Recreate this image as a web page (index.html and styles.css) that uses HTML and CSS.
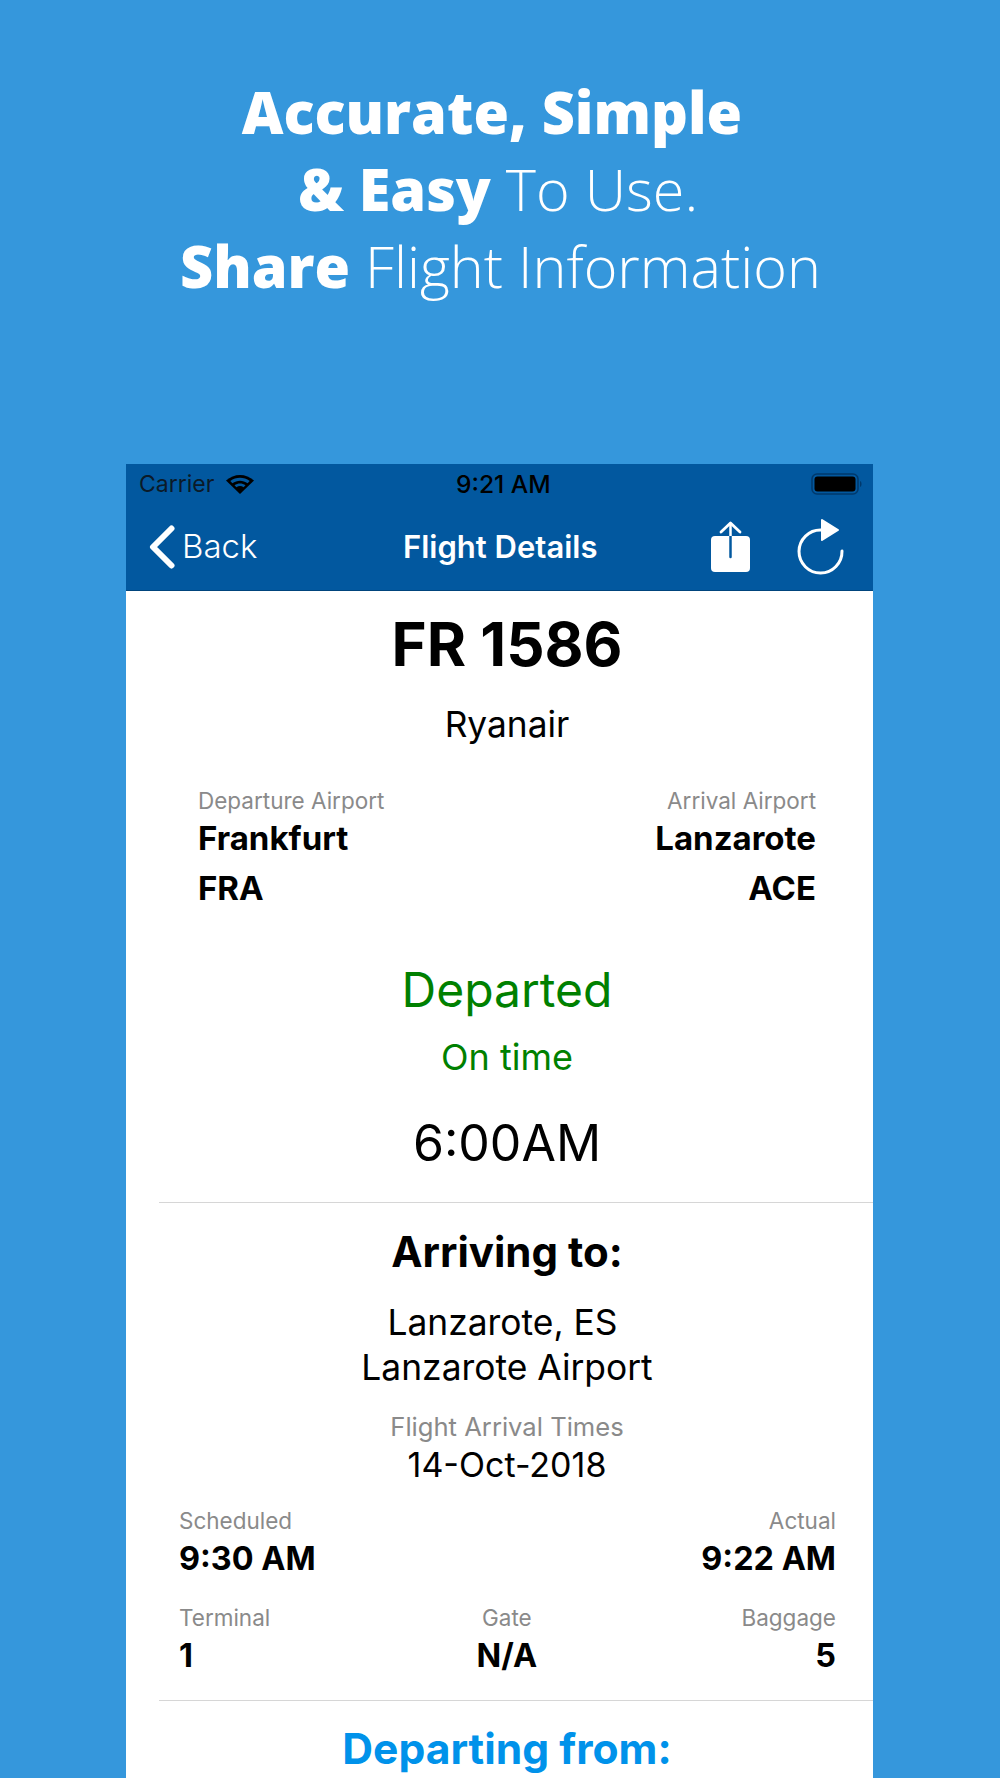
FILE: index.html
```html
<!DOCTYPE html>
<html lang="en">
<head>
  <meta charset="UTF-8" />
  <title>Flight Details</title>
  <link rel="stylesheet" href="styles.css">
</head>
<body>
  <h1 class="headline">
    <div><span class="heavy">Accurate, Simple</span></div>
    <div class="line-2"><span class="heavy">&amp; Easy</span> To Use.</div>
    <div class="line-3"><span class="heavy">Share</span> Flight Information</div>
  </h1>

  <div class="phone">
    <div class="status-bar">
      <div class="carrier">
        Carrier
        <svg class="wifi" width="30" height="22" viewBox="0 0 30 22">
          <path d="M15 21 L1 7.5 C9 0 21 0 29 7.5 Z" fill="#000"/>
          <path d="M5.3 8 C11 3.6 19 3.6 24.7 8 L22.6 10.2 C18 6.8 12 6.8 7.4 10.2 Z" fill="#02589f"/>
          <path d="M9.5 12.2 C13 9.8 17 9.8 20.5 12.2 L18.6 14.2 C16.2 12.7 13.8 12.7 11.4 14.2 Z" fill="#02589f"/>
        </svg>
      </div>
      <div class="clock">9:21 AM</div>
      <svg class="battery" width="52" height="24" viewBox="0 0 52 24">
        <rect x="1" y="2" width="46" height="20" rx="5" fill="none" stroke="#00396c" stroke-width="1.5"/>
        <rect x="3.5" y="4.5" width="41" height="15" rx="3" fill="#000"/>
        <path d="M49 9 C51 9.5 51 14.5 49 15 Z" fill="#00396c"/>
      </svg>
    </div>

    <nav class="nav-bar">
      <div class="back">
        <svg width="28" height="44" viewBox="0 0 28 44">
          <path d="M23.5 3.5 L5 22 L23.5 40.5" fill="none" stroke="#fff" stroke-width="6" stroke-linecap="round" stroke-linejoin="round"/>
        </svg>
        <span>Back</span>
      </div>
      <div class="nav-title">Flight Details</div>
      <div class="nav-icons">
        <svg width="40" height="52" viewBox="0 0 40 52">
          <rect x="0" y="15" width="39" height="36" rx="4" fill="#fff"/>
          <path d="M19.5 36 V3" fill="none" stroke="#02589f" stroke-width="2.5" stroke-linecap="round"/>
          <path d="M19.5 2.5 V15" fill="none" stroke="#fff" stroke-width="2.5"/>
          <path d="M10 11 L19.5 2 L29 11" fill="none" stroke="#fff" stroke-width="2.8" stroke-linecap="round" stroke-linejoin="round"/>
        </svg>
        <svg width="48" height="56" viewBox="0 0 48 56">
          <path d="M45 32 A21.5 21.5 0 1 1 24 11" fill="none" stroke="#fff" stroke-width="3" stroke-linecap="round"/>
          <path d="M25 1 L41 11 L25 21 Z" fill="#fff" stroke="#fff" stroke-width="2" stroke-linejoin="round"/>
        </svg>
      </div>
    </nav>

    <main class="details">
      <section class="section section-top">
        <div class="flight-no">FR 1586</div>
        <div class="airline">Ryanair</div>

        <div class="airports">
          <div>
            <div class="label">Departure Airport</div>
            <div class="airport-name">Frankfurt</div>
            <div class="airport-code">FRA</div>
          </div>
          <div class="right">
            <div class="label">Arrival Airport</div>
            <div class="airport-name">Lanzarote</div>
            <div class="airport-code">ACE</div>
          </div>
        </div>

        <div class="status">Departed</div>
        <div class="status-sub">On time</div>
        <div class="big-time">6:00AM</div>
      </section>

      <section class="section section-arrive">
        <div class="section-title">Arriving to:</div>
        <div class="place place-city">Lanzarote, ES</div>
        <div class="place">Lanzarote Airport</div>
        <div class="label times-label">Flight Arrival Times</div>
        <div class="times-date">14-Oct-2018</div>

        <div class="info-row">
          <div>
            <div class="label">Scheduled</div>
            <div class="value">9:30 AM</div>
          </div>
          <div class="right">
            <div class="label">Actual</div>
            <div class="value">9:22 AM</div>
          </div>
        </div>
        <div class="info-row info-row-3">
          <div>
            <div class="label">Terminal</div>
            <div class="value">1</div>
          </div>
          <div class="center">
            <div class="label">Gate</div>
            <div class="value">N/A</div>
          </div>
          <div class="right">
            <div class="label">Baggage</div>
            <div class="value">5</div>
          </div>
        </div>
      </section>

      <section class="section-depart">
        <div class="section-title blue">Departing from:</div>
      </section>
    </main>
  </div>
</body>
</html>
```

FILE: styles.css
```css
* {
  box-sizing: border-box;
}

html,
body {
  height: 1778px;
  overflow: hidden;
}

body {
  margin: 0;
  background: #3597dc;
  font-family: Inter, "Liberation Sans", sans-serif;
  color: #000;
}

.headline {
  margin: 0;
  padding: 74px 16px 0 0;
  height: 464px;
  text-align: center;
  color: #fff;
  font-family: "Open Sans", sans-serif;
  font-size: 57.5px;
  line-height: 77px;
  font-weight: 300;
}

.heavy {
  font-weight: 800;
}

.line-2 {
  padding-left: 12px;
}

.line-3 {
  padding-left: 17px;
}

.phone {
  width: 747px;
  margin-left: 126px;
  background: #fff;
  height: 1314px;
}

.status-bar {
  height: 39px;
  background: #02589f;
  display: flex;
  align-items: center;
  justify-content: space-between;
  padding: 0 10px 0 13px;
  position: relative;
  font-size: 23px;
}

.carrier {
  display: flex;
  align-items: center;
  gap: 11px;
  color: #0b1a28;
}

.clock {
  position: absolute;
  left: 330px;
  font-size: 24.6px;
  font-weight: 500;
}

.nav-bar {
  height: 88px;
  background: #02589f;
  border-bottom: 1px solid #00447c;
  display: flex;
  align-items: center;
  position: relative;
  color: #fff;
  padding: 0 28px 0 22px;
}

.back {
  display: flex;
  align-items: center;
  gap: 6px;
  font-size: 33px;
  font-weight: 300;
}

.back span {
  margin-top: -2px;
}

.nav-title {
  position: absolute;
  left: 277px;
  font-size: 31px;
  font-weight: 600;
}

.nav-icons {
  margin-left: auto;
  display: flex;
  align-items: center;
  gap: 46px;
}

.details {
  padding-left: 33px;
  text-align: center;
}

.section {
  border-bottom: 1px solid #d6d6d6;
  padding-right: 18px;
}

.section-top {
  height: 612px;
  padding-top: 23px;
}

.flight-no {
  font-size: 60px;
  line-height: 60px;
  font-weight: 700;
}

.airline {
  font-size: 35.3px;
  line-height: 42px;
  margin-top: 30px;
}

.label {
  color: #8a8a8a;
  font-size: 22.5px;
  line-height: 26px;
  font-weight: 400;
}

.airports {
  display: flex;
  justify-content: space-between;
  text-align: left;
  padding: 0 39px;
  margin-top: 42px;
}

.right {
  text-align: right;
}

.center {
  text-align: center;
  padding-left: 2px;
}

.airport-name {
  font-size: 33px;
  line-height: 40px;
  font-weight: 700;
  margin-top: 4px;
}

.airport-code {
  font-size: 33px;
  line-height: 40px;
  font-weight: 700;
  margin-top: 10px;
}

.status {
  color: #008000;
  font-size: 48px;
  line-height: 56px;
  margin-top: 54px;
}

.status-sub {
  color: #008000;
  font-size: 36px;
  line-height: 42px;
  margin-top: 18px;
}

.big-time {
  font-size: 50px;
  line-height: 60px;
  margin-top: 35px;
}

.section-arrive {
  height: 498px;
  padding-top: 24px;
}

.section-title {
  font-size: 42px;
  line-height: 50px;
  font-weight: 700;
}

.section-title.blue {
  font-size: 42.6px;
  color: #0092ea;
}

.place {
  font-size: 35.4px;
  line-height: 45px;
}

.place-city {
  padding-right: 9px;
}

.section-title + .place {
  margin-top: 23px;
}

.times-label {
  font-size: 25.6px;
  line-height: 30px;
  margin-top: 22px;
}

.times-date {
  font-size: 34px;
  line-height: 40px;
  margin-top: 3px;
}

.info-row {
  display: flex;
  justify-content: space-between;
  text-align: left;
  padding: 0 19px 0 20px;
  margin-top: 23px;
}

.info-row-3 {
  margin-top: 25px;
}

.value {
  font-size: 32.4px;
  line-height: 42px;
  font-weight: 700;
  margin-top: 4px;
}

.section-depart {
  padding-top: 23px;
  padding-right: 18px;
}
```
